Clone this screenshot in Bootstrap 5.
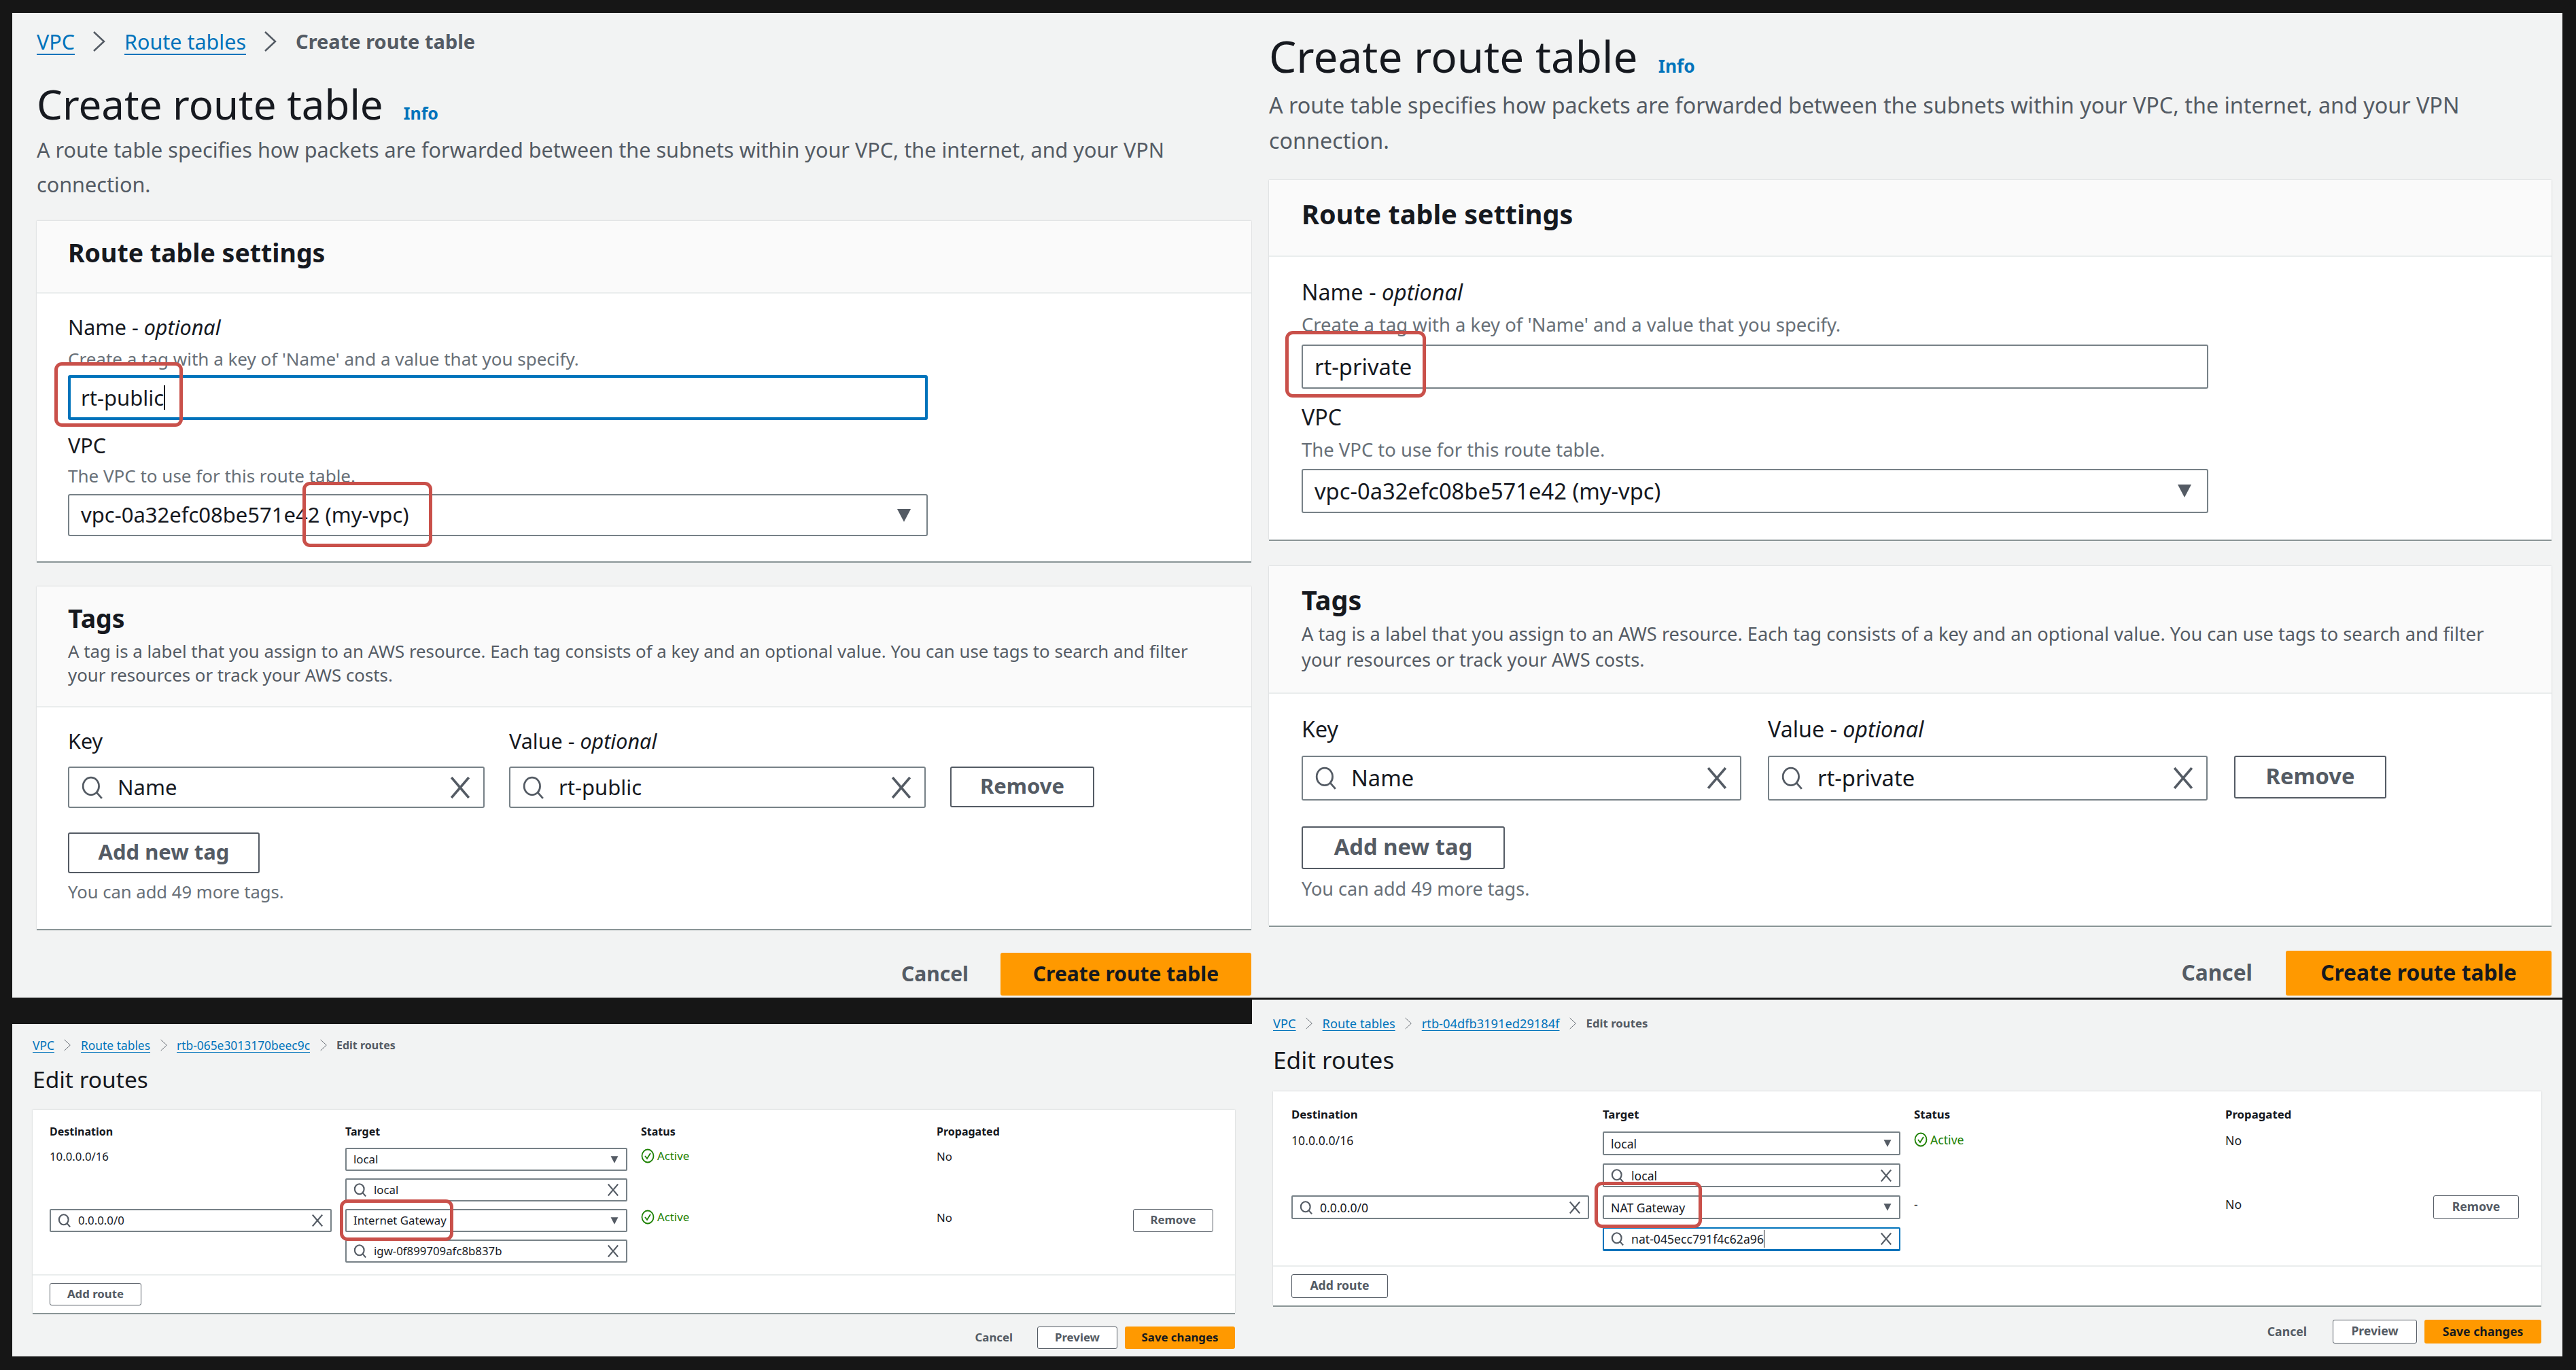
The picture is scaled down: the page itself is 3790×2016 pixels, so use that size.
<!DOCTYPE html>
<html lang="en"><head><meta charset="utf-8"><title>Route tables</title>
<link href="https://cdn.jsdelivr.net/npm/bootstrap@5.3.0/dist/css/bootstrap.min.css" rel="stylesheet">
<style>
html,body{margin:0;background:#161616;}
body{font-family:"Noto Sans","Liberation Sans",sans-serif;color:#16191f;}
.frame{width:3790px;height:2016px;padding:19px 20px 20px 18px;display:grid;grid-template-columns:1824px 1928px;background:#161616;overflow:hidden;}
.win{background:#f2f3f3;position:relative;overflow:hidden;}
.win-a{--u:1px;height:1449px;padding:22px 1px 0 36px;--pad:46px;
 --hd:107px;--hp:24px;--bp:31px;--nm:9px;--i1:8px;--ih:66px;--v1:19px;--vh:7px;--sm:11px;--sh:62px;--descm:6px;--descl:51px;--cm:28px;
 --c2:37px;--h2:178px;--tp:24px;--tl:35px;--b2:31px;--k1:16px;--kh:61px;--rh:60px;--am:36px;--ah:60px;--ym:12px;--fm:35px;--fh:63px;--cw:613px;--cg:36px;--rm:37px;--cancel:47px;--lw:1265px;--rw:212px;--aw:282px;--fw:369px;--ts:23px}
.win-b{--u:1.056px;height:1449px;padding:28px 16px 0 25px;--pad:48px;
 --hd:113px;--hp:27px;--bp:34px;--nm:10px;--i1:13px;--ih:65px;--v1:24px;--vh:10px;--sm:12px;--sh:65px;--descm:9px;--descl:54px;--cm:29px;
 --c2:39px;--h2:188px;--tp:27px;--tl:38px;--b2:34px;--k1:17px;--kh:66px;--rh:63px;--am:38px;--ah:63px;--ym:13px;--fm:37px;--fh:66px;--cw:647px;--cg:39px;--rm:38px;--cancel:49px;--lw:1334px;--rw:224px;--aw:299px;--fw:391px;--ts:24px}
.win-c{--u:1px;height:489px;margin-top:39px;padding:18px 25px 0 30px;
 --cm:14px;--cm2:18px;--pl:25px;--hd2:19px;--w:415px;--rh2:34px;--g:11px;--pb:17px;--rp:32px;--fp:11px;--ah2:33px;--aw2:135px;--rw2:118px;--fm2:20px;--bh:33px;--pw:118px;--sw:162px;--cancel2:36px}
.win-d{--u:1.05px;height:525px;margin-top:3px;padding:22px 31px 0 31px;
 --cm:17px;--cm2:20px;--pl:27px;--hd2:21px;--w:438px;--rh2:35px;--g:12px;--pb:21px;--rp:33px;--fp:11px;--ah2:35px;--aw2:142px;--rw2:126px;--fm2:21px;--bh:35px;--pw:124px;--sw:172px;--cancel2:38px}
.stack{display:flex;flex-direction:column;}
/* breadcrumbs */
.crumbs{margin:0;height:40px;align-items:center;font-size:calc(var(--u)*30.5);line-height:40px;flex-wrap:nowrap;}
.crumbs .breadcrumb-item+.breadcrumb-item{padding-left:0;}
.crumbs .breadcrumb-item+.breadcrumb-item::before{display:none;}
.crumbs a{color:#0073bb;text-decoration:underline;text-underline-offset:6px;text-decoration-thickness:2px;}
.crumbs .active{color:#545b64;font-weight:700;font-size:calc(var(--u)*29);}
.chev{width:21px;height:30px;margin:0 27px 0 25px;fill:none;stroke:#545b64;stroke-width:2.5;display:block;}
.crumbs-sm{height:26px;line-height:26px;font-size:calc(var(--u)*17.4);}
.crumbs-sm a{text-underline-offset:3px;text-decoration-thickness:1px;}
.crumbs-sm .active{font-size:calc(var(--u)*16);}
.crumbs-sm .chev{width:12px;height:20px;margin:0 13.5px;stroke-width:1.5;}
/* headings */
.ttl{margin:36px 0 0;font-size:60px;line-height:72px;font-weight:400;display:flex;align-items:baseline;gap:0 30px;}
.win-b .ttl{margin-top:0;font-size:calc(var(--u)*60.5);}
.info{font-size:calc(var(--u)*25);line-height:1;color:#0073bb;font-weight:700;text-decoration:none;}
.dsc{margin:var(--descm) 0 0;font-size:calc(var(--u)*30.6);line-height:var(--descl);color:#545b64;}
.win-b .dsc{line-height:52px;padding-bottom:4px;}
.ttl2{margin:var(--cm) 0 0;padding-bottom:4px;font-size:calc(var(--u)*33.5);line-height:46px;font-weight:400;}
/* cards */
.panel-card{border:0;border-radius:0;background:#fff;box-shadow:0 2px 0 #8a9596,0 0 2px rgba(0,28,36,.2);}
.panel-head{background:#fafafa;border:0;border-bottom:2px solid #eaeded;border-radius:0!important;padding:var(--hp) 46px 0 var(--pad);height:var(--hd);}
.panel-head h2{margin:0;padding-bottom:4px;font-size:calc(var(--u)*37.5);line-height:46px;font-weight:700;}
.head-tags{height:var(--h2);padding-top:var(--tp);}
.head-tags p{margin:4px 0 0;font-size:calc(var(--u)*25.8);line-height:var(--tl);color:#545b64;}
.body-a{padding:var(--bp) 0 0 var(--pad);height:394px;}
.win-b .body-a{height:416px;}
.body-t{padding:var(--b2) 46px 0 var(--pad);}
.lab{font-size:calc(var(--u)*30.5);line-height:36px;padding-bottom:4px;}
.hnt{font-size:calc(var(--u)*26);line-height:32px;color:#687078;}
.m-nm{margin-top:var(--nm);}.m-i1{margin-top:var(--i1);}.m-v1{margin-top:var(--v1);}.m-vh{margin-top:var(--vh);}.m-sm{margin-top:var(--sm);}
/* fields */
.fld{display:flex;align-items:center;background:#fff;border:2px solid #778187;border-radius:3px;padding:0 18px 0 17px;font-size:calc(var(--u)*31);color:#16191f;width:var(--lw);white-space:nowrap;box-shadow:none;line-height:1.2;}
.h-in{height:var(--ih);}.h-se{height:var(--sh);justify-content:space-between;}
.focus-b{border:4px solid #0073bb;padding-left:15px;}
.caret-b{border-right:2px solid #16191f;height:36px;display:inline-block;line-height:36px;}
.tri{width:22px;height:19px;fill:#545b64;display:block;flex:none;margin-right:4px;}
.sic{width:34px;height:34px;fill:none;stroke:#545b64;stroke-width:2.6;flex:none;display:block;}
.xic{width:34px;height:32px;fill:none;stroke:#545b64;stroke-width:3.4;flex:none;display:block;margin-left:auto;}
.tagrow{display:flex;align-items:flex-start;margin-top:var(--k1);gap:var(--cg);}
.tagf{width:var(--cw);height:var(--kh);gap:20px;padding:0 17px 0 17px;flex:none;}
.labs{display:flex;gap:var(--cg);}
.labs div{width:var(--cw);}
.opt{font-style:italic;}
.abtn{font-size:calc(var(--u)*31);font-weight:700;color:#545b64;border:2px solid #545b64;border-radius:3px;background:#fff;padding:0 0 3px;line-height:1;display:flex;align-items:center;justify-content:center;}
.abtn:hover{color:#545b64;background:#fff;border-color:#545b64;}
.rm1{width:var(--rw);height:var(--rh);margin-left:0;flex:none;}
.ad1{width:var(--aw);height:var(--ah);margin-top:var(--am);}
.ynote{margin-top:var(--ym);font-size:calc(var(--u)*25.6);line-height:32px;color:#687078;padding-bottom:38px;}
.foot{margin-top:var(--fm);display:flex;justify-content:flex-end;align-items:center;gap:var(--cancel);}
.cancel{font-size:calc(var(--u)*30);font-weight:700;color:#545b64;text-decoration:none;padding-bottom:3px;}
.prim{background:#f90;border:0;border-radius:3px;color:#16191f;font-weight:700;padding:0 0 3px;font-size:calc(var(--u)*30);width:var(--fw);height:var(--fh);display:flex;align-items:center;justify-content:center;}
.prim:hover{background:#f90;color:#16191f;}
.cr2{margin-top:var(--c2);}
/* route grid */
.rt-card{margin-top:var(--cm2);}
.rt-grid{display:grid;grid-template-columns:repeat(3,var(--w)) 1fr;column-gap:20px;row-gap:var(--g);padding:var(--hd2) var(--rp) var(--pb) var(--pl);font-size:calc(var(--u)*16.8);line-height:26px;grid-auto-rows:var(--rh2);grid-template-rows:26px;}
.rt-h{font-weight:700;font-size:calc(var(--u)*16);}
.rf{display:flex;align-items:center;height:var(--rh2);width:var(--w);border:2px solid #778187;border-radius:2px;background:#fff;padding:0 10px;white-space:nowrap;gap:10px;}
.rf .sic{width:20px;height:20px;stroke-width:3.4;}
.rf .xic{width:18px;height:18px;stroke-width:3.6;}
.rf .tri{width:12px;height:11px;margin:0 1px 0 auto;}
.rf-sel{gap:0;}
.rf-focus{border-color:#0073bb;border-width:2px 2px 3px;}
.rf-focus .cr{border-right:1px solid #16191f;}
.act{color:#1d8102;display:flex;align-items:center;gap:4px;align-self:start;margin-top:-1px;}
.act svg{width:20px;height:22px;fill:none;stroke:#1d8102;stroke-width:1.8;display:block;}
.nocell{display:flex;justify-content:space-between;align-items:flex-start;}
.rm2{width:var(--rw2);height:var(--rh2);font-size:calc(var(--u)*16.8);border-width:1.5px;padding-bottom:1px;}
.rt-foot{border-top:2px solid #eaeded;padding:var(--fp) var(--pl);}
.ad2{width:var(--aw2);height:var(--ah2);font-size:calc(var(--u)*16.8);border-width:1.5px;padding-bottom:1px;}
.rfoot{margin-top:var(--fm2);display:flex;justify-content:flex-end;align-items:center;}
.can2{font-size:calc(var(--u)*16.8);font-weight:700;color:#545b64;text-decoration:none;margin-right:var(--cancel2);padding-bottom:1px;}
.pv{width:var(--pw);height:var(--bh);font-size:calc(var(--u)*16.8);border-width:1.5px;margin-right:11px;padding-bottom:1px;}
.sv{width:var(--sw);height:var(--bh);font-size:calc(var(--u)*16.8);padding-bottom:1px;}
/* annotation boxes */
.redbox{position:absolute;border:5px solid #c9504a;border-radius:11px;pointer-events:none;}
.rb1{left:62px;top:514px;width:189px;height:95px;}
.rb2{left:427px;top:690px;width:191px;height:96px;}
.rb3{left:49px;top:468px;width:207px;height:98px;}
.rb4{left:482px;top:258px;width:167px;height:61px;}
.rb5{left:504px;top:268px;width:158px;height:68px;}
</style></head><body>
<svg width="0" height="0" class="d-none" aria-hidden="true"><defs>
<symbol id="i-s" viewBox="0 0 32 32"><ellipse cx="14" cy="14" rx="11" ry="12"/><line x1="22" y1="23" x2="29" y2="31"/></symbol>
<symbol id="i-x" viewBox="0 0 30 30"><line x1="3" y1="1" x2="27" y2="29"/><line x1="27" y1="1" x2="3" y2="29"/></symbol>
<symbol id="i-t" viewBox="0 0 22 19"><polygon points="1,0 21,0 11,19"/></symbol>
<symbol id="i-c" viewBox="0 0 21 30"><polyline points="3,1 18,15 3,29"/></symbol>
<symbol id="i-k" viewBox="0 0 20 22"><ellipse cx="10" cy="11" rx="8.5" ry="9.5"/><polyline points="6,11 9,15 14,7"/></symbol>
</defs></svg>
<div class="frame">
 <div class="stack">
  <section class="win win-a">
   <ol class="breadcrumb crumbs"><li class="breadcrumb-item"><a href="#">VPC</a></li><svg class="chev"><use href="#i-c"/></svg><li class="breadcrumb-item"><a href="#">Route tables</a></li><svg class="chev"><use href="#i-c"/></svg><li class="breadcrumb-item active">Create route table</li></ol>
   <h1 class="ttl">Create route table <a class="info" href="#">Info</a></h1>
   <p class="dsc">A route table specifies how packets are forwarded between the subnets within your VPC, the internet, and your VPN connection.</p>
   <div class="card panel-card" style="margin-top:28px">
    <div class="card-header panel-head"><h2>Route table settings</h2></div>
    <div class="card-body body-a">
     <div class="lab">Name - <span class="opt">optional</span></div>
     <div class="hnt m-nm">Create a tag with a key of 'Name' and a value that you specify.</div>
     <div class="form-control fld h-in focus-b m-i1"><span class="caret-b">rt-public</span></div>
     <div class="lab m-v1">VPC</div>
     <div class="hnt m-vh">The VPC to use for this route table.</div>
     <div class="form-control fld h-se m-sm">vpc-0a32efc08be571e42 (my-vpc)<svg class="tri"><use href="#i-t"/></svg></div>
    </div>
   </div>
   <div class="card panel-card cr2">
    <div class="card-header panel-head head-tags"><h2>Tags</h2><p>A tag is a label that you assign to an AWS resource. Each tag consists of a key and an optional value. You can use tags to search and filter your resources or track your AWS costs.</p></div>
    <div class="card-body body-t">
     <div class="labs lab"><div>Key</div><div>Value - <span class="opt">optional</span></div></div>
     <div class="tagrow">
      <div class="form-control fld tagf"><svg class="sic"><use href="#i-s"/></svg>Name<svg class="xic"><use href="#i-x"/></svg></div>
      <div class="form-control fld tagf"><svg class="sic"><use href="#i-s"/></svg>rt-public<svg class="xic"><use href="#i-x"/></svg></div>
      <button class="btn abtn rm1">Remove</button>
     </div>
     <button class="btn abtn ad1">Add new tag</button>
     <div class="ynote">You can add 49 more tags.</div>
    </div>
   </div>
   <div class="foot"><a class="cancel" href="#">Cancel</a><button class="btn prim">Create route table</button></div>
   <div class="redbox rb1"></div><div class="redbox rb2"></div>
  </section>
  <section class="win win-c">
   <ol class="breadcrumb crumbs crumbs-sm"><li class="breadcrumb-item"><a href="#">VPC</a></li><svg class="chev"><use href="#i-c"/></svg><li class="breadcrumb-item"><a href="#">Route tables</a></li><svg class="chev"><use href="#i-c"/></svg><li class="breadcrumb-item"><a href="#">rtb-065e3013170beec9c</a></li><svg class="chev"><use href="#i-c"/></svg><li class="breadcrumb-item active">Edit routes</li></ol>
   <h1 class="ttl2">Edit routes</h1>
   <div class="card panel-card rt-card">
    <div class="rt-grid">
     <div class="rt-h">Destination</div><div class="rt-h">Target</div><div class="rt-h">Status</div><div class="rt-h">Propagated</div>
     <div>10.0.0.0/16</div><div class="rf rf-sel">local<svg class="tri"><use href="#i-t"/></svg></div><div class="act"><svg><use href="#i-k"/></svg>Active</div><div>No</div>
     <div></div><div class="rf"><svg class="sic"><use href="#i-s"/></svg>local<svg class="xic"><use href="#i-x"/></svg></div><div></div><div></div>
     <div class="rf"><svg class="sic"><use href="#i-s"/></svg>0.0.0.0/0<svg class="xic"><use href="#i-x"/></svg></div><div class="rf rf-sel">Internet Gateway<svg class="tri"><use href="#i-t"/></svg></div><div class="act"><svg><use href="#i-k"/></svg>Active</div><div class="nocell">No<button class="btn abtn rm2">Remove</button></div>
     <div></div><div class="rf"><svg class="sic"><use href="#i-s"/></svg>igw-0f899709afc8b837b<svg class="xic"><use href="#i-x"/></svg></div><div></div><div></div>
    </div>
    <div class="rt-foot"><button class="btn abtn ad2">Add route</button></div>
   </div>
   <div class="rfoot"><a class="can2" href="#">Cancel</a><button class="btn abtn pv">Preview</button><button class="btn prim sv">Save changes</button></div>
   <div class="redbox rb4"></div>
  </section>
 </div>
 <div class="stack">
  <section class="win win-b">
   <h1 class="ttl">Create route table <a class="info" href="#">Info</a></h1>
   <p class="dsc">A route table specifies how packets are forwarded between the subnets within your VPC, the internet, and your VPN connection.</p>
   <div class="card panel-card" style="margin-top:29px">
    <div class="card-header panel-head"><h2>Route table settings</h2></div>
    <div class="card-body body-a">
     <div class="lab">Name - <span class="opt">optional</span></div>
     <div class="hnt m-nm">Create a tag with a key of 'Name' and a value that you specify.</div>
     <div class="form-control fld h-in m-i1">rt-private</div>
     <div class="lab m-v1">VPC</div>
     <div class="hnt m-vh">The VPC to use for this route table.</div>
     <div class="form-control fld h-se m-sm">vpc-0a32efc08be571e42 (my-vpc)<svg class="tri"><use href="#i-t"/></svg></div>
    </div>
   </div>
   <div class="card panel-card cr2">
    <div class="card-header panel-head head-tags"><h2>Tags</h2><p>A tag is a label that you assign to an AWS resource. Each tag consists of a key and an optional value. You can use tags to search and filter your resources or track your AWS costs.</p></div>
    <div class="card-body body-t">
     <div class="labs lab"><div>Key</div><div>Value - <span class="opt">optional</span></div></div>
     <div class="tagrow">
      <div class="form-control fld tagf"><svg class="sic"><use href="#i-s"/></svg>Name<svg class="xic"><use href="#i-x"/></svg></div>
      <div class="form-control fld tagf"><svg class="sic"><use href="#i-s"/></svg>rt-private<svg class="xic"><use href="#i-x"/></svg></div>
      <button class="btn abtn rm1">Remove</button>
     </div>
     <button class="btn abtn ad1">Add new tag</button>
     <div class="ynote">You can add 49 more tags.</div>
    </div>
   </div>
   <div class="foot"><a class="cancel" href="#">Cancel</a><button class="btn prim">Create route table</button></div>
   <div class="redbox rb3"></div>
  </section>
  <section class="win win-d">
   <ol class="breadcrumb crumbs crumbs-sm"><li class="breadcrumb-item"><a href="#">VPC</a></li><svg class="chev"><use href="#i-c"/></svg><li class="breadcrumb-item"><a href="#">Route tables</a></li><svg class="chev"><use href="#i-c"/></svg><li class="breadcrumb-item"><a href="#">rtb-04dfb3191ed29184f</a></li><svg class="chev"><use href="#i-c"/></svg><li class="breadcrumb-item active">Edit routes</li></ol>
   <h1 class="ttl2">Edit routes</h1>
   <div class="card panel-card rt-card">
    <div class="rt-grid">
     <div class="rt-h">Destination</div><div class="rt-h">Target</div><div class="rt-h">Status</div><div class="rt-h">Propagated</div>
     <div>10.0.0.0/16</div><div class="rf rf-sel">local<svg class="tri"><use href="#i-t"/></svg></div><div class="act"><svg><use href="#i-k"/></svg>Active</div><div>No</div>
     <div></div><div class="rf"><svg class="sic"><use href="#i-s"/></svg>local<svg class="xic"><use href="#i-x"/></svg></div><div></div><div></div>
     <div class="rf"><svg class="sic"><use href="#i-s"/></svg>0.0.0.0/0<svg class="xic"><use href="#i-x"/></svg></div><div class="rf rf-sel">NAT Gateway<svg class="tri"><use href="#i-t"/></svg></div><div>-</div><div class="nocell">No<button class="btn abtn rm2">Remove</button></div>
     <div></div><div class="rf rf-focus"><svg class="sic"><use href="#i-s"/></svg><span class="cr">nat-045ecc791f4c62a96</span><svg class="xic"><use href="#i-x"/></svg></div><div></div><div></div>
    </div>
    <div class="rt-foot"><button class="btn abtn ad2">Add route</button></div>
   </div>
   <div class="rfoot"><a class="can2" href="#">Cancel</a><button class="btn abtn pv">Preview</button><button class="btn prim sv">Save changes</button></div>
   <div class="redbox rb5"></div>
  </section>
 </div>
</div>
<script src="https://cdn.jsdelivr.net/npm/bootstrap@5.3.0/dist/js/bootstrap.bundle.min.js"></script>
</body></html>
